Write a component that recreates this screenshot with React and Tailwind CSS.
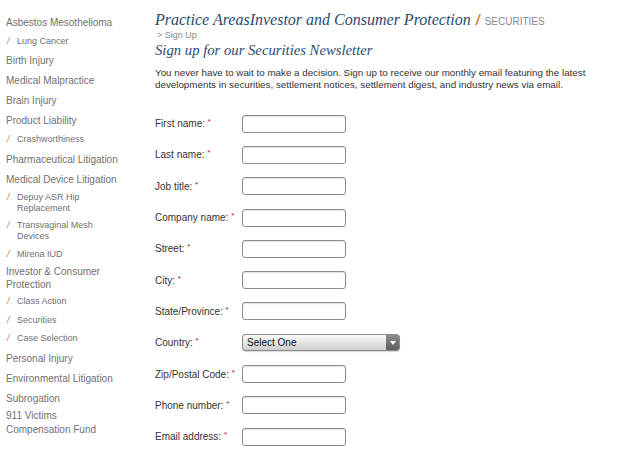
import React from 'react';

const sans = { fontFamily: '"Liberation Sans", Arial, sans-serif' };
const serif = { fontFamily: '"Liberation Serif", Georgia, serif' };

const menu = [
  { label: 'Asbestos Mesothelioma' },
  { label: 'Lung Cancer', sub: true },
  { label: 'Birth Injury' },
  { label: 'Medical Malpractice' },
  { label: 'Brain Injury' },
  { label: 'Product Liability' },
  { label: 'Crashworthiness', sub: true },
  { label: 'Pharmaceutical Litigation' },
  { label: 'Medical Device Litigation' },
  { label: 'Depuy ASR Hip Replacement', sub: true, wrap: true },
  { label: 'Transvaginal Mesh Devices', sub: true, wrap: true },
  { label: 'Mirena IUD', sub: true },
  { label: 'Investor & Consumer Protection', wrap: true },
  { label: 'Class Action', sub: true },
  { label: 'Securities', sub: true },
  { label: 'Case Selection', sub: true },
  { label: 'Personal Injury' },
  { label: 'Environmental Litigation' },
  { label: 'Subrogation' },
  { label: '911 Victims Compensation Fund', wrap: true },
];

const fields = [
  'First name:',
  'Last name:',
  'Job title:',
  'Company name:',
  'Street:',
  'City:',
  'State/Province:',
  'Country:',
  'Zip/Postal Code:',
  'Phone number:',
  'Email address:',
];

// wrapped entries sit tighter than single-line ones
const Sidebar = () => (
  <ul className="w-[150px] shrink-0 pl-[6px] pt-[12px] text-[#707070]" style={sans}>
    {menu.map((m) =>
      m.sub ? (
        <li
          key={m.label}
          className={`flex text-[9px] ${m.wrap ? 'py-[2.5px] leading-[11.5px]' : 'py-[3.75px] leading-[11px]'}`}
        >
          <span className="w-[11px] shrink-0 pl-[1px] italic text-[#c8742e]">/</span>
          <span className="w-[90px]">{m.label}</span>
        </li>
      ) : (
        <li
          key={m.label}
          className={`w-[118px] text-[10px] ${m.wrap ? 'py-[1px] leading-[13.5px]' : 'py-[3.5px] leading-[13px]'}`}
        >
          {m.label}
        </li>
      )
    )}
  </ul>
);

const SelectBox = () => (
  <div className="flex h-[17px] w-[158px] items-stretch overflow-hidden rounded-[3px] border border-[#8a8a8a] bg-gradient-to-b from-[#fafafa] to-[#cfcfcf] shadow-[0_1px_1px_rgba(0,0,0,0.15)]">
    <span className="flex-1 pl-[4px] text-[10px] leading-[15px] text-[#111]">Select One</span>
    <span className="flex w-[13px] items-center justify-center bg-gradient-to-b from-[#8d8d8d] to-[#5e5e5e]">
      <svg width="6" height="4" viewBox="0 0 6 4">
        <path d="M0 0h6L3 4z" fill="#fff" />
      </svg>
    </span>
  </div>
);

const App = () => (
  <div className="flex h-[460px] w-[640px] overflow-hidden bg-white">
    <Sidebar />
    <div className="flex-1 pl-[5px] pt-[12px]">
      <div className="flex items-baseline whitespace-nowrap leading-[16px]">
        <span className="text-[16px] italic text-[#2a4b72]" style={serif}>
          Practice AreasInvestor and Consumer Protection
        </span>
        <span className="ml-[5px] text-[14px] italic font-bold text-[#d2803f]" style={sans}>/</span>
        <span className="ml-[5px] text-[10px] uppercase text-[#888]" style={sans}>Securities</span>
      </div>
      <div className="pl-[2px] text-[9px] leading-[11px] text-[#888]" style={sans}>&gt; Sign Up</div>
      <h2 className="text-[14.7px] italic leading-[18px] text-[#2a4b72]" style={serif}>
        Sign up for our Securities Newsletter
      </h2>
      <p className="mt-[8px] w-[440px] text-[9.8px] leading-[12px] text-[#333]" style={sans}>
        You never have to wait to make a decision. Sign up to receive our monthly email featuring the latest
        developments in securities, settlement notices, settlement digest, and industry news via email.
      </p>
      <form className="mt-[17px]" style={sans}>
        {fields.map((f) => (
          <div key={f} className="flex h-[31.3px] items-center">
            <label className="w-[87px] shrink-0 text-[10px] text-[#333]">
              {f} <span className="text-[8px] align-top text-[#b01818]">*</span>
            </label>
            {f === 'Country:' ? (
              <SelectBox />
            ) : (
              <input
                type="text"
                className="h-[18px] w-[104px] rounded-[3px] border border-[#8c8c8c] bg-white shadow-[inset_0_1px_1px_rgba(0,0,0,0.12)]"
              />
            )}
          </div>
        ))}
      </form>
    </div>
  </div>
);

export default App;
